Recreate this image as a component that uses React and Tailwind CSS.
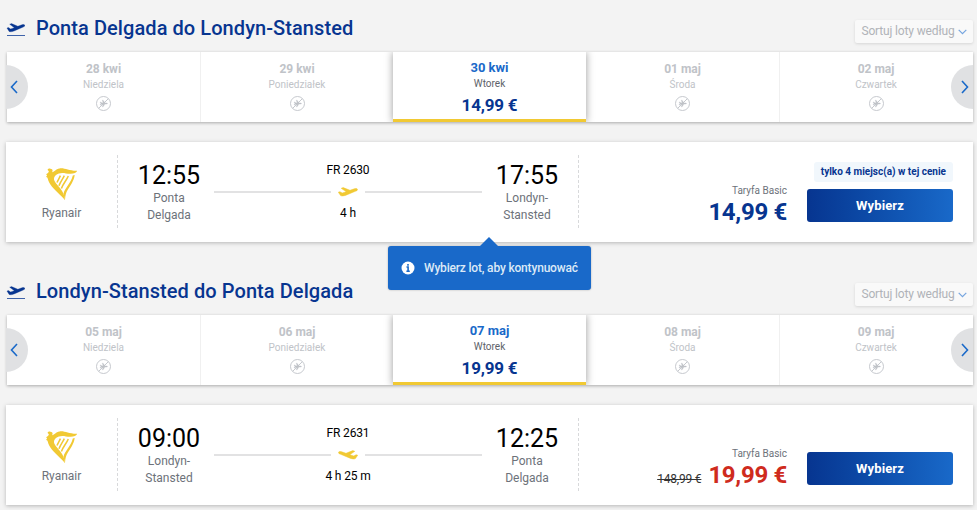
const flights = [
  {
    title: "Ponta Delgada do Londyn-Stansted",
    days: [
      { date: "28 kwi", day: "Niedziela" },
      { date: "29 kwi", day: "Poniedziałek" },
      { date: "30 kwi", day: "Wtorek", price: "14,99 €" },
      { date: "01 maj", day: "Środa" },
      { date: "02 maj", day: "Czwartek" },
    ],
    from: { time: "12:55", city: ["Ponta", "Delgada"] },
    to: { time: "17:55", city: ["Londyn-", "Stansted"] },
    number: "FR 2630",
    duration: "4 h",
    price: "14,99 €",
    badge: "tylko 4 miejsc(a) w tej cenie",
  },
  {
    title: "Londyn-Stansted do Ponta Delgada",
    days: [
      { date: "05 maj", day: "Niedziela" },
      { date: "06 maj", day: "Poniedziałek" },
      { date: "07 maj", day: "Wtorek", price: "19,99 €" },
      { date: "08 maj", day: "Środa" },
      { date: "09 maj", day: "Czwartek" },
    ],
    from: { time: "09:00", city: ["Londyn-", "Stansted"] },
    to: { time: "12:25", city: ["Ponta", "Delgada"] },
    number: "FR 2631",
    duration: "4 h 25 m",
    price: "19,99 €",
    oldPrice: "148,99 €",
    isReturn: true,
  },
];

const PLANE =
  "M0.3 5.2 L1.9 4.7 L4.2 6 L8.2 4.8 L3.2 1.3 L5.2 0.6 L12 3.3 L16.3 1.8 C17.8 1.3 19.3 1.5 19.5 2.4 C19.7 3.3 18.6 3.9 17.3 4.3 L8.6 7.9 C6.2 8.9 3.6 9.3 2.6 8.6 Z";

function TakeoffIcon() {
  return (
    <svg width="19" height="15" viewBox="0 0 19 15" className="shrink-0">
      <g transform="translate(0.7 1) scale(0.93 0.98)">
        <path d={PLANE} fill="#073590" stroke="#073590" strokeWidth="0.3" />
      </g>
      <path d="M1 13.5H19" stroke="#3f63a9" strokeWidth="1" />
    </svg>
  );
}

function RoutePlane({ isReturn }) {
  return (
    <svg width="20" height="10" viewBox="0 0 20 10" className={isReturn ? "-scale-x-100" : ""}>
      <path d={PLANE} fill="#f1c933" stroke="#f1c933" strokeWidth="0.5" />
    </svg>
  );
}

function NoFlightIcon() {
  return (
    <svg width="15" height="15" viewBox="0 0 15 15" fill="none" stroke="#c0c3c8">
      <circle cx="7.5" cy="7.5" r="7" strokeWidth="0.9" />
      <path d="M2.7 12.3L12.3 2.7" strokeWidth="0.9" />
      <path
        d="M4 6l.9 1.5L4 9h.7l1.1-.8h1.4L6.2 10.8h.9L9 8.1h1.8c.9 0 .9-1.2 0-1.2H9L7.1 4.2h-.9L7.2 6.8H5.8L4.7 6z"
        fill="#c0c3c8"
        strokeWidth="0.3"
      />
    </svg>
  );
}

function HarpLogo() {
  return (
    <svg width="32" height="33" viewBox="0 0 32 33" fill="#f1c933">
      <path d="M1.6 2.1C1.7 0.9 3 0.4 4.2 0.7C5.5 0.6 6.5 1.3 6.6 2.5L6.2 4.3C8.6 3.6 9.7 1 13.5 0.4C19-.3 23 3.1 31.2 2.8C30.6 4.7 27.7 5.9 24.2 5.8C19.5 5.6 16.5 4 12.8 5.6C9.4 7.1 7.7 9 8 11.6C8.6 15.8 16.4 20.3 18.3 28L18.9 32.2C15.5 27.6 8.4 22.6 4.4 16.6C2.6 13.7 1.9 11.3 1.5 9.8L0 8.7L1.1 7.7L0.2 6.2L2.2 4.8L2.9 3.2Z" />
      <path d="M26.8 7.6L28.7 7C27.9 13 24.6 17 21.6 22C20 24.6 19.3 27.2 19 31.7L17.5 25.7C18.8 20.2 25 15 26.8 7.6Z" />
      <g fill="none" stroke="#f1c933" strokeWidth="1.5">
        <path d="M14.4 7.6C13.4 10 12 11.8 11 14.6" />
        <path d="M18.3 7.6C16.8 11 14.3 13.7 13 17.8" />
        <path d="M22.3 8C20.6 12.3 17.1 15.6 15.4 20.6" />
      </g>
    </svg>
  );
}

function Chevron({ right }) {
  return (
    <svg width="8" height="14" viewBox="0 0 8 14" className={right ? "-scale-x-100" : ""}>
      <path d="M7 1L1.5 7L7 13" fill="none" stroke="#1969c9" strokeWidth="1.6" />
    </svg>
  );
}

function DayCell({ item, hasBorder }) {
  if (item.price) {
    return (
      <div className="relative z-10 flex flex-col items-center border-b-[3px] border-[#f1c933] bg-white pt-[8px] shadow-[0_0_8px_rgba(0,0,0,0.4)]">
        <p className="text-[13px] leading-4 font-bold text-[#1969c9]">{item.date}</p>
        <p className="mt-px text-[10px] leading-[13px] text-[#5d6269]">{item.day}</p>
        <p className="mt-[5px] text-[17px] leading-5 font-bold tracking-[-0.2px] text-[#073590]">{item.price}</p>
      </div>
    );
  }

  return (
    <div className={`flex flex-col items-center pt-[9px] ${hasBorder ? "border-l border-[#f0f0f0]" : ""}`}>
      <p className="text-[12px] leading-4 font-bold text-[#c0c3c8]">{item.date}</p>
      <p className="mt-[2px] mb-[5px] text-[10px] leading-3 text-[#c0c3c8]">{item.day}</p>
      <NoFlightIcon />
    </div>
  );
}

function Carousel({ days }) {
  return (
    <div className="relative h-[70px] pl-px">
      <div className="h-full bg-white shadow-[0_1px_3px_rgba(0,0,0,0.3)]">
        <div className="grid h-full grid-cols-5 overflow-hidden pr-px">
          {days.map((item, index) => (
            <DayCell key={item.date} item={item} hasBorder={index === 1 || index === 4} />
          ))}
        </div>
      </div>
      <button className="absolute top-[13px] left-0 z-20 flex h-11 w-[22px] items-center rounded-r-full bg-[#e0e1e3] pl-1">
        <Chevron />
      </button>
      <button className="absolute top-[13px] right-0 z-20 flex h-11 w-[22px] items-center justify-end rounded-l-full bg-[#e0e1e3] pr-1">
        <Chevron right />
      </button>
    </div>
  );
}

function Stop({ stop }) {
  return (
    <div className="w-[90px] text-center">
      <p className="text-[25px] leading-[30px] text-black">{stop.time}</p>
      <div className="-mt-px">
        {stop.city.map((line) => (
          <p key={line} className="text-[12px] leading-[16.5px] text-[#6d727a]">
            {line}
          </p>
        ))}
      </div>
    </div>
  );
}

function FlightCard({ flight }) {
  return (
    <div className="mt-5 flex h-[100px] bg-white shadow-[0_1px_4px_rgba(0,0,0,0.25)]">
      <div className="flex w-[111px] flex-col items-center pt-[26px]">
        <HarpLogo />
        <p className="mt-1 text-[12px] leading-4 text-[#6d727a]">Ryanair</p>
      </div>
      <Divider />
      <div className="flex w-[460px] justify-between px-[6px] pt-[19px]">
        <Stop stop={flight.from} />
        <div className="mt-px w-[268px] text-center text-[12px] leading-4 tracking-[-0.15px] text-black">
          <p>{flight.number}</p>
          <div className="flex h-[27px] items-center gap-[7px]">
            <span className="h-[2px] flex-1 bg-[#e2e2e3]" />
            <RoutePlane isReturn={flight.isReturn} />
            <span className="h-[2px] flex-1 bg-[#e2e2e3]" />
          </div>
          <p>{flight.duration}</p>
        </div>
        <Stop stop={flight.to} />
      </div>
      <Divider />
      <div className="flex flex-1 items-end justify-end gap-5 pr-5 pb-5">
        <div className="-mb-1 text-right">
          <p className="text-[10px] leading-3 text-[#6d727a]">Taryfa Basic</p>
          <div className="mt-px flex h-7 items-baseline justify-end gap-[7px] leading-7">
            {flight.oldPrice && (
              <span className="text-[12px] tracking-[-0.2px] text-[#333] line-through">{flight.oldPrice}</span>
            )}
            <span
              className={`text-[24px] font-bold tracking-[-0.3px] ${
                flight.oldPrice ? "text-[#cf2b1d]" : "text-[#073590]"
              }`}
            >
              {flight.price}
            </span>
          </div>
        </div>
        <div className="flex flex-col items-end gap-[7px]">
          {flight.badge && (
            <p className="h-5 rounded-[3px] bg-[#f1f7fc] px-[7px] text-[10px] leading-5 font-bold text-[#073590]">
              {flight.badge}
            </p>
          )}
          <button className="h-[33px] w-[146px] rounded-[3px] bg-linear-to-r from-[#073590] to-[#1969c9] text-[13px] font-bold tracking-[0.1px] text-white">
            Wybierz
          </button>
        </div>
      </div>
    </div>
  );
}

function Divider() {
  return (
    <div className="mt-[13px] h-[74px] w-px bg-[repeating-linear-gradient(to_bottom,#d8d9db_0_3px,transparent_3px_5px)]" />
  );
}

function FlightSection({ flight }) {
  return (
    <section className="h-[263px] pt-[18px]">
      <div className="flex h-[34px] justify-between">
        <div className="flex items-start gap-[11px]">
          <div className="mt-1">
            <TakeoffIcon />
          </div>
          <h2 className="-mt-[2px] text-[20px] leading-6 font-medium tracking-[0.07px] text-[#073590]">{flight.title}</h2>
        </div>
        <button className="mt-[2px] flex h-[23px] w-[118px] items-center justify-center gap-[3px] rounded-[2px] bg-[#f9f9f9] pb-[2px] text-[12px] tracking-[-0.15px] text-[#b0b3b8] shadow-[0_1px_3px_rgba(0,0,0,0.12)]">
          Sortuj loty według
          <svg width="9" height="6" viewBox="0 0 9 6" className="mt-[2px]">
            <path d="M0.7 0.8L4.5 4.6L8.3 0.8" fill="none" stroke="#75a5df" strokeWidth="1.2" />
          </svg>
        </button>
      </div>
      <Carousel days={flight.days} />
      <FlightCard flight={flight} />
    </section>
  );
}

function Hint() {
  return (
    <div className="absolute top-[246px] left-[388px] flex h-11 w-[203px] items-center rounded-[3px] bg-[#1969c9] pl-[13px] shadow-[0_0_2px_rgba(0,0,0,0.3)]">
      <svg width="18" height="9" viewBox="0 0 18 9" className="absolute -top-[9px] left-[92px]">
        <path d="M0 9L9 0L18 9Z" fill="#1969c9" />
      </svg>
      <svg width="14" height="14" viewBox="0 0 14 14" className="shrink-0">
        <circle cx="7" cy="7" r="6.5" fill="#fff" />
        <path d="M7 3V4.7M5.5 6H7.1V10.2M5.4 10.2H8.8" fill="none" stroke="#1969c9" strokeWidth="1.6" />
      </svg>
      <p className="ml-[9px] text-[12px] font-medium tracking-[-0.18px] whitespace-nowrap text-[#dce9f7]">
        Wybierz lot, aby kontynuować
      </p>
    </div>
  );
}

export default function App() {
  return (
    <main className="relative h-[510px] overflow-hidden bg-[#f3f3f3] pr-1 pl-[6px] font-['Roboto',sans-serif]">
      {flights.map((flight) => (
        <FlightSection key={flight.number} flight={flight} />
      ))}
      <Hint />
    </main>
  );
}
